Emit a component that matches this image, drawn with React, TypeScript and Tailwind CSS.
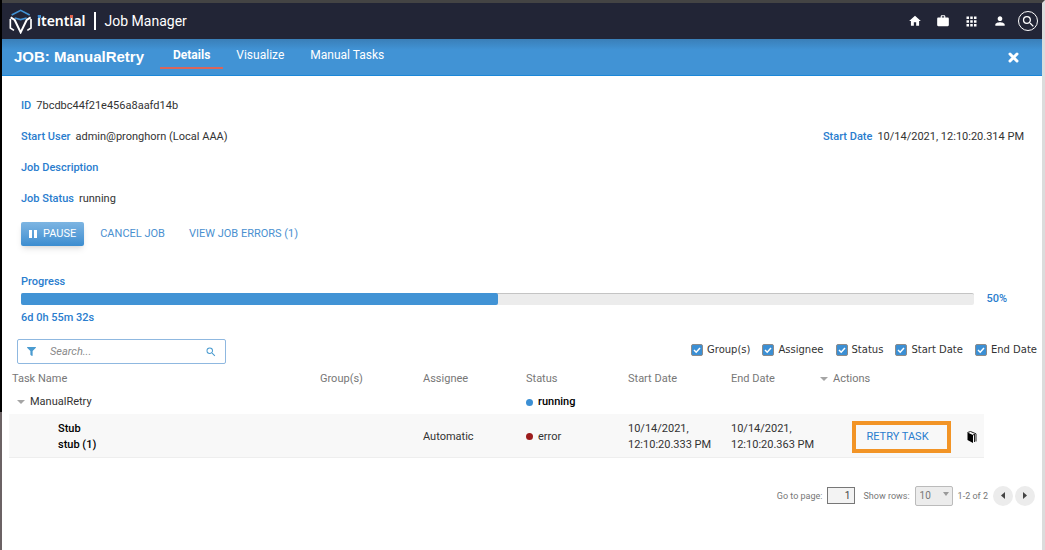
import { ReactNode } from "react";
import { MdHome, MdWork, MdApps, MdPerson, MdSearch } from "react-icons/md";
import { FaFilter } from "react-icons/fa";

const tabs = ["Details", "Visualize", "Manual Tasks"];
const columns = ["Group(s)", "Assignee", "Status", "Start Date", "End Date"];

const Logo = () => (
  <svg viewBox="26 24 72 75" className="w-6 h-[25px]" fill="none" strokeWidth="5">
    <path d="M34 42 61 28 88 42M43 51l18 5 18-5" stroke="#4193d5" />
    <path d="M30 54v27l11 7M92 54v27l-11 7" stroke="#fff" />
    <path d="M31 49 43 57 61 94 79 57 91 49" stroke="#fff" strokeWidth="6" />
  </svg>
);

const BookIcon = () => (
  <svg viewBox="0 0 10 12" className="w-2.5 h-3">
    <path d="M.5 1.500 6 4v8L.5 9Z" fill="#000" />
    <path d="M.5 1.500 3.500.5 9 2.800V10.500M6 4l1-.5M7.500 3v8" fill="none" stroke="#222" />
  </svg>
);

const Caret = () => (
  <svg viewBox="0 0 8 4" className="w-2 h-1" fill="#a5a5a5">
    <path d="M0 0h8L4 4z" />
  </svg>
);

const Field = ({ label, children }: { label: string; children?: ReactNode }) => (
  <p>
    <span className="font-medium text-[#2a7dce] mr-[5px]">{label}</span>
    {children}
  </p>
);

const App = () => {
  const progress = 50;

  return (
    <div className="flex min-h-screen bg-white font-['Roboto',sans-serif] text-[11px] leading-4 text-[#333]">
      <div className="w-0.5 shrink-0 bg-linear-to-b from-black from-75% to-[#6b6264] to-75%" />
      <div className="flex-1 min-w-0 border-t-[3px] border-t-[#444] border-r-[3px] border-r-[#dcdcdc]">
        <header className="flex items-center h-9 pl-[7px] pr-1 bg-[#222536] text-white">
          <Logo />
          <span className="relative ml-1 font-['Noto_Sans',sans-serif] font-semibold text-sm leading-4">
            itential
            <span className="absolute left-px top-0.5 size-[3px] bg-[#4193d5]" />
            <span className="absolute right-[13px] top-0.5 size-[3px] bg-[#e0644f]" />
          </span>
          <span className="w-0.5 h-[18px] ml-2 mr-[9px] bg-white" />
          <h1 className="text-sm">Job Manager</h1>
          <nav className="flex items-center gap-3.5 ml-auto">
            <a href="#home" aria-label="Home"><MdHome size={14} /></a>
            <a href="#work" aria-label="Work"><MdWork size={14} /></a>
            <a href="#apps" aria-label="Apps"><MdApps size={15} /></a>
            <a href="#user" aria-label="User"><MdPerson size={14} /></a>
            <button
              aria-label="Search"
              className="flex items-center justify-center size-5 -ml-[3px] rounded-full border border-white"
            >
              <MdSearch size={15} />
            </button>
          </nav>
        </header>

        <div className="flex items-center h-[37px] pl-3 pr-[23px] bg-linear-to-b from-[#3a7fb8] to-[#4193d5] to-30% border-b border-[#1b87d8] text-white">
          <h2 className="font-['Liberation_Sans',sans-serif] font-bold text-[15px]">JOB: ManualRetry</h2>
          <nav className="flex mt-0.5 ml-4 text-xs">
            {tabs.map((tab, i) => (
              <a
                key={tab}
                href="#tab"
                className={
                  i === 0
                    ? "px-[13px] pb-1 font-bold border-b-2 border-[#d9655a]"
                    : "px-[13px] pb-1 border-b-2 border-transparent"
                }
              >
                {tab}
              </a>
            ))}
          </nav>
          <button aria-label="Close" className="ml-auto">
            <svg viewBox="0 0 11 11" className="size-[11px]" stroke="currentColor" strokeWidth="3" strokeLinecap="round">
              <path d="m2 2 7 7M9 2 2 9" />
            </svg>
          </button>
        </div>

        <main>
          <section className="flex flex-col gap-[15px] pt-[22px] pl-[19px] pr-[18px]">
            <Field label="ID">7bcdbc44f21e456a8aafd14b</Field>
            <div className="flex justify-between">
              <Field label="Start User">admin@pronghorn (Local AAA)</Field>
              <Field label="Start Date">10/14/2021, 12:10:20.314 PM</Field>
            </div>
            <Field label="Job Description" />
            <Field label="Job Status">running</Field>
            <div className="flex items-center gap-6 text-[#4a90d0]">
              <button className="flex items-center gap-1.5 h-6 px-2 -mr-2 rounded-xs bg-linear-to-b from-[#7db5e2] to-[#3b8dd0] text-white shadow-md">
                <svg viewBox="0 0 8 8" className="size-2" fill="currentColor">
                  <path d="M0 0h3v8H0zM5 0h3v8H5z" />
                </svg>
                PAUSE
              </button>
              <button>CANCEL JOB</button>
              <button>VIEW JOB ERRORS (1)</button>
            </div>
          </section>

          <section className="mt-7 pl-[19px] pr-[35px] font-medium text-[#2a7dce]">
            <p>Progress</p>
            <div className="flex items-center gap-3 mt-[3px] mb-[5px] h-3">
              <div className="flex-1 h-3 rounded-xs bg-[#ececec] border-t border-[#c4c4c4]">
                <div className="h-3 -mt-px rounded-xs bg-[#4193d5]" style={{ width: `${progress}%` }} />
              </div>
              <span>{progress}%</span>
            </div>
            <p>6d 0h 55m 32s</p>
          </section>

          <div className="flex items-start justify-between mt-[13px] pl-[15px] pr-[5px]">
            <div className="flex items-center w-[209px] h-[25px] pl-[9px] pr-2 rounded-xs border border-[#8fb8e0] text-[#4a9bd0]">
              <FaFilter size={9} />
              <input
                type="search"
                aria-label="Search tasks"
                placeholder="Search..."
                className="flex-1 min-w-0 ml-3.5 italic placeholder:text-[#8a8a8a] outline-none"
              />
              <MdSearch size={12} />
            </div>
            <div className="flex gap-3 mt-[3px] font-['DejaVu_Sans',sans-serif] text-[10px]">
              {columns.map((column) => (
                <label key={column} className="flex items-center gap-1">
                  <span className="grid">
                    <input
                      type="checkbox"
                      defaultChecked
                      className="peer [grid-area:1/1] appearance-none size-3 rounded-xs border border-[#8b8b8b] checked:bg-[#3b8fd4]"
                    />
                    <svg viewBox="0 0 12 12" className="[grid-area:1/1] size-3 pointer-events-none" fill="none">
                      <path d="m3 6 2.200 2.200L9 4" stroke="#fff" strokeWidth="1.500" />
                    </svg>
                  </span>
                  {column}
                </label>
              ))}
            </div>
          </div>

          <div className="pl-[7px] pr-[58px] mt-1">
            <table className="w-full table-fixed text-left">
              <thead className="text-[#777]">
                <tr className="h-[22px]">
                  <th className="w-[308px] pl-[3px] font-normal">Task Name</th>
                  <th className="w-[103px] pl-[3px] font-normal">Group(s)</th>
                  <th className="w-[103px] pl-[3px] font-normal">Assignee</th>
                  <th className="w-[102px] pl-[3px] font-normal">Status</th>
                  <th className="w-[103px] pl-[3px] font-normal">Start Date</th>
                  <th className="w-[89px] pl-[3px] font-normal">End Date</th>
                  <th className="pl-[3px] font-normal">
                    <span className="flex items-center gap-[5px]">
                      <Caret />
                      Actions
                    </span>
                  </th>
                </tr>
              </thead>
              <tbody>
                <tr className="h-6">
                  <td className="pl-2">
                    <span className="flex items-center gap-[5px]">
                      <Caret />
                      ManualRetry
                    </span>
                  </td>
                  <td />
                  <td />
                  <td className="pl-[3px]">
                    <span className="flex items-center gap-[5px] font-medium text-black">
                      <span className="size-[7px] rounded-full bg-[#3b8fd4]" />
                      running
                    </span>
                  </td>
                  <td />
                  <td />
                  <td />
                </tr>
                <tr className="h-[43px] bg-[#f8f8f8] border-b border-[#eee] [&>td]:pt-[3px]">
                  <td className="pl-[49px] font-medium text-black">
                    Stub
                    <br />
                    stub (1)
                  </td>
                  <td />
                  <td className="pl-[3px]">Automatic</td>
                  <td className="pl-[3px]">
                    <span className="flex items-center gap-[5px]">
                      <span className="size-[7px] rounded-full bg-[#9c1c1c]" />
                      error
                    </span>
                  </td>
                  <td className="pl-[3px] whitespace-nowrap">
                    10/14/2021,
                    <br />
                    12:10:20.333 PM
                  </td>
                  <td className="pl-[3px] whitespace-nowrap">
                    10/14/2021,
                    <br />
                    12:10:20.363 PM
                  </td>
                  <td className="pl-[35px]">
                    <div className="flex items-center gap-4">
                      <button className="w-[99px] h-8 pr-2 border-4 border-[#f29426] text-[#2a7dce]">RETRY TASK</button>
                      <button aria-label="Open log"><BookIcon /></button>
                    </div>
                  </td>
                </tr>
              </tbody>
            </table>
          </div>

          <div className="flex items-center justify-end gap-[5px] mt-7 pr-[7px] text-[9px] text-[#777]">
            <label htmlFor="page">Go to page:</label>
            <input
              id="page"
              type="text"
              defaultValue="1"
              className="w-7 h-[17px] px-1 mr-[3px] text-right text-[10px] text-[#444] bg-[#f3f3f3] border border-[#777]"
            />
            <label htmlFor="rows">Show rows:</label>
            <div className="grid items-center">
              <select
                id="rows"
                className="[grid-area:1/1] appearance-none w-[38px] h-5 pl-1 rounded-xs bg-[#ececec] border border-[#bbb] text-[10px]"
              >
                <option>10</option>
                <option>20</option>
              </select>
              <svg viewBox="0 0 6 4" className="[grid-area:1/1] justify-self-end mr-1 mb-1 w-1.5 h-1 pointer-events-none" fill="#999">
                <path d="M0 0h6L3 4z" />
              </svg>
            </div>
            <span>1-2 of 2</span>
            <button aria-label="Previous page" className="flex items-center justify-center size-5 -mr-[3px] rounded-full bg-[#ececec]">
              <svg viewBox="0 0 4 7" className="w-1 h-[7px]" fill="#444"><path d="M4 0v7L0 3.500z" /></svg>
            </button>
            <button aria-label="Next page" className="flex items-center justify-center size-5 rounded-full bg-[#ececec]">
              <svg viewBox="0 0 4 7" className="w-1 h-[7px]" fill="#444"><path d="M0 0v7l4-3.500z" /></svg>
            </button>
          </div>
        </main>
      </div>
    </div>
  );
};

export default App;
